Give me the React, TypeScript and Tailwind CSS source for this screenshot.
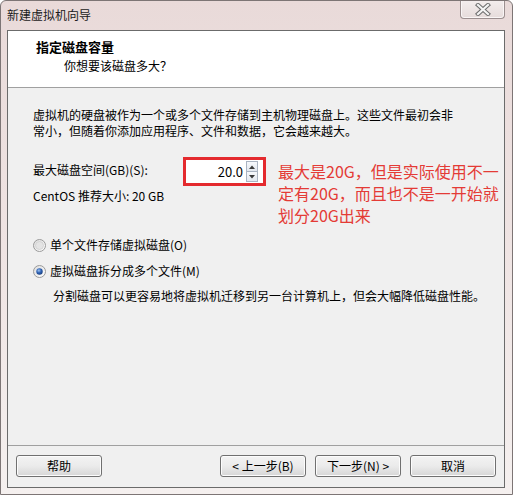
import React from "react";

function Radio({ checked }: { checked?: boolean }) {
  return (
    <svg width="13" height="13" viewBox="0 0 13 13" className="shrink-0">
      <defs>
        <linearGradient id={checked ? "rg1" : "rg0"} x1="0" y1="0" x2="1" y2="1">
          <stop offset="0" stopColor="#dcdcdc" />
          <stop offset="1" stopColor="#ffffff" />
        </linearGradient>
        <radialGradient id="dot" cx="0.4" cy="0.35" r="0.7">
          <stop offset="0" stopColor="#9fc4f0" />
          <stop offset="0.5" stopColor="#2e62b5" />
          <stop offset="1" stopColor="#1a3d7a" />
        </radialGradient>
      </defs>
      <circle cx="6.5" cy="6.5" r="6" fill={`url(#${checked ? "rg1" : "rg0"})`} stroke="#9a9a9a" strokeWidth="1" />
      {checked ? <circle cx="6.5" cy="6.5" r="3.2" fill="url(#dot)" /> : <circle cx="6.5" cy="6.5" r="4" fill="#e4e4e4" stroke="#c8c8c8" strokeWidth="0.6" />}
    </svg>
  );
}

function Btn({ children }: { children: React.ReactNode }) {
  return (
    <div className="w-[86px] h-[22px] flex items-center justify-center rounded-[3px] border border-[#707070] bg-gradient-to-b from-[#f3f3f3] via-[#ebebeb] to-[#d6d6d6] shadow-[inset_0_0_0_1px_#fcfcfc] text-[12px] leading-[16px] text-black">
      {children}
    </div>
  );
}

export default function App() {
  return (
    <div className="w-[513px] h-[495px] flex flex-col relative overflow-hidden rounded-t-[6px] border border-[#7d7575] bg-gradient-to-b from-[#e9dad9] via-[#efe4e3] to-[#f5f0ef] font-['Noto_Sans_CJK_SC',sans-serif] text-[12px] text-black">
      {/* title bar */}
      <div className="h-[29px] flex items-center pl-[6px] pb-[1px]">
        <span className="text-[12px] leading-[16px] text-[#1a1a1a]">新建虚拟机向导</span>
      </div>
      {/* close button */}
      <div className="absolute top-[-1px] right-[7px] w-[45px] h-[19px] rounded-b-[4px] border border-[#9b8f8f] border-t-0 bg-gradient-to-b from-[#f4eeee] to-[#e6dcdb] shadow-[inset_0_0_0_1px_#faf6f6] flex items-center justify-center">
        <svg width="16" height="13" viewBox="0 0 16 13">
          <path d="M3 2 L13 11 M13 2 L3 11" stroke="#6f6f6f" strokeWidth="4.2" strokeLinecap="square" />
          <path d="M3 2 L13 11 M13 2 L3 11" stroke="#f4f4f4" strokeWidth="2.2" strokeLinecap="square" />
        </svg>
      </div>

      {/* client area */}
      <div className="flex-1 ml-[6px] mr-[7px] mb-[6px] border border-[#6b6b6b] flex flex-col bg-[#f0f0f0]">
        {/* header */}
        <div className="h-[57px] shrink-0 bg-white border-b border-[#a0a0a0] pl-[28px] pt-[8px]">
          <div className="text-[13px] leading-[16px] font-bold">指定磁盘容量</div>
          <div className="mt-[3px] ml-[28px] text-[12px] leading-[16px]">你想要该磁盘多大？</div>
        </div>

        {/* body */}
        <div className="flex-1 pl-[25px] pt-[19px] flex flex-col">
          <div className="text-[12px] leading-[16px]">
            <div className="whitespace-nowrap">虚拟机的硬盘被作为一个或多个文件存储到主机物理磁盘上。这些文件最初会非</div>
            <div className="whitespace-nowrap">常小，但随着你添加应用程序、文件和数据，它会越来越大。</div>
          </div>

          <div className="mt-[18px] flex items-start">
            <div className="w-[150px] shrink-0">
              <div className="leading-[26px] whitespace-nowrap">最大磁盘空间(GB)(S):</div>
              <div className="mt-[5px] leading-[16px] whitespace-nowrap">CentOS 推荐大小: 20 GB</div>
            </div>
            <div className="w-[83px] h-[29px] shrink-0 border-[3px] border-[#e42a2e] bg-white flex items-center">
              <div className="flex-1 text-right pr-[3px] text-[13px] leading-[16px]">20.0</div>
              <div className="w-[12px] h-[21px] mr-[5px] flex flex-col border border-[#aab4c2]">
                <div className="flex-1 flex items-center justify-center bg-gradient-to-b from-[#f6f8fb] to-[#e3e8ef] border-b border-[#aab4c2]">
                  <svg width="6" height="4" viewBox="0 0 6 4"><path d="M0 4 L3 0.5 L6 4 Z" fill="#3a3a3a" /></svg>
                </div>
                <div className="flex-1 flex items-center justify-center bg-gradient-to-b from-[#f6f8fb] to-[#e3e8ef]">
                  <svg width="6" height="4" viewBox="0 0 6 4"><path d="M0 0 L3 3.5 L6 0 Z" fill="#3a3a3a" /></svg>
                </div>
              </div>
            </div>
            <div className="ml-[12px] mt-[3px] text-[16px] leading-[22px] text-[#e43b36]">
              <div className="whitespace-nowrap">最大是20G，但是实际使用不一</div>
              <div className="whitespace-nowrap">定有20G，而且也不是一开始就</div>
              <div className="whitespace-nowrap">划分20G出来</div>
            </div>
          </div>

          <div className="mt-[11px] flex items-center gap-[4px] leading-[16px]">
            <Radio />
            <span>单个文件存储虚拟磁盘(O)</span>
          </div>
          <div className="mt-[10px] flex items-center gap-[4px] leading-[16px]">
            <Radio checked />
            <span>虚拟磁盘拆分成多个文件(M)</span>
          </div>
          <div className="mt-[9px] pl-[20px] leading-[16px] whitespace-nowrap">分割磁盘可以更容易地将虚拟机迁移到另一台计算机上，但会大幅降低磁盘性能。</div>
        </div>

        {/* footer */}
        <div className="h-[42px] shrink-0 border-t border-[#a0a0a0] px-[8px] pt-[9px] flex items-start">
          <Btn>帮助</Btn>
          <div className="flex-1" />
          <div className="flex gap-[9px]">
            <Btn>&lt; 上一步(B)</Btn>
            <Btn>下一步(N) &gt;</Btn>
            <Btn>取消</Btn>
          </div>
        </div>
      </div>
    </div>
  );
}
